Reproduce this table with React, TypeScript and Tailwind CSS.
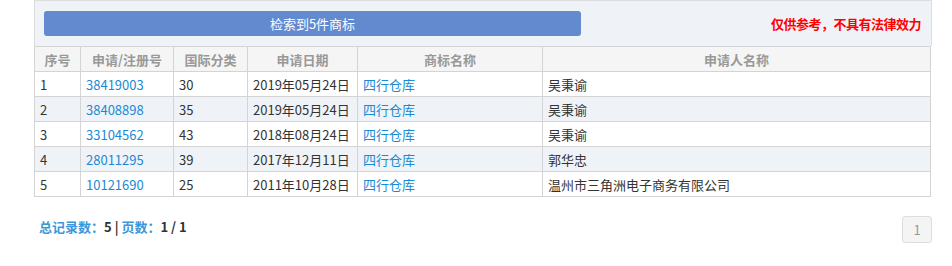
import React from "react";

const rows = [
  ["1", "38419003", "30", "2019年05月24日", "四行仓库", "吴秉谕"],
  ["2", "38408898", "35", "2019年05月24日", "四行仓库", "吴秉谕"],
  ["3", "33104562", "43", "2018年08月24日", "四行仓库", "吴秉谕"],
  ["4", "28011295", "39", "2017年12月11日", "四行仓库", "郭华忠"],
  ["5", "10121690", "25", "2011年10月28日", "四行仓库", "温州市三角洲电子商务有限公司"],
];

export default function App() {
  return (
    <div
      className="w-[952px] h-[266px] bg-white text-[13px] text-[#333]"
      style={{ fontFamily: '"Microsoft YaHei", "Noto Sans CJK SC", "Noto Sans", sans-serif' }}
    >
      <div className="ml-[34px] w-[898px]">
        <div className="h-[46px] bg-[#eff3f7] border border-b-0 border-[#dddddd] flex items-center pl-[9px] pr-[10px]">
          <div className="w-[537px] h-[25px] rounded-[3px] bg-[#6389cf] text-white flex items-center justify-center leading-none">
            检索到5件商标
          </div>
          <div className="ml-auto text-[#ff0000] font-bold leading-none tracking-[-0.5px]">仅供参考，不具有法律效力</div>
        </div>
        <table className="w-[897px] border-collapse table-fixed">
          <colgroup>
            <col className="w-[46px]" />
            <col className="w-[93px]" />
            <col className="w-[74px]" />
            <col className="w-[110px]" />
            <col className="w-[185px]" />
            <col />
          </colgroup>
          <thead>
            <tr className="h-[25px] bg-[#f5f5f5]">
              {["序号", "申请/注册号", "国际分类", "申请日期", "商标名称", "申请人名称"].map((h) => (
                <th key={h} className="border border-[#d4d4d4] text-center font-bold text-[#999] p-0 leading-none">
                  {h}
                </th>
              ))}
            </tr>
          </thead>
          <tbody>
            {rows.map((r, i) => (
              <tr key={r[0]} className={`h-[25px] ${i % 2 === 1 ? "bg-[#eff3f7]" : "bg-white"}`}>
                <td className="border border-[#d4d4d4] px-[5px] py-0 leading-none">{r[0]}</td>
                <td className="border border-[#d4d4d4] px-[5px] py-0 leading-none text-[#1a8ad4]">{r[1]}</td>
                <td className="border border-[#d4d4d4] px-[5px] py-0 leading-none">{r[2]}</td>
                <td className="border border-[#d4d4d4] px-[5px] py-0 leading-none">{r[3]}</td>
                <td className="border border-[#d4d4d4] px-[5px] py-0 leading-none text-[#1a8ad4]">{r[4]}</td>
                <td className="border border-[#d4d4d4] px-[5px] py-0 leading-none">{r[5]}</td>
              </tr>
            ))}
          </tbody>
        </table>
        <div className="flex items-start mt-[19px] pl-[5px]">
          <div className="font-bold leading-none mt-[4px]">
            <span className="text-[#3c97d8]">总记录数：</span>
            <span className="text-[#333]">5</span>
            <span className="text-[#333]"> | </span>
            <span className="text-[#3c97d8]">页数：</span>
            <span className="text-[#333]">1 / 1</span>
          </div>
          <div className="ml-auto w-[30px] h-[27px] rounded-[3px] border border-[#dddddd] bg-[#f4f4f4] text-[#999] flex items-center justify-center leading-none">
            1
          </div>
        </div>
      </div>
    </div>
  );
}
